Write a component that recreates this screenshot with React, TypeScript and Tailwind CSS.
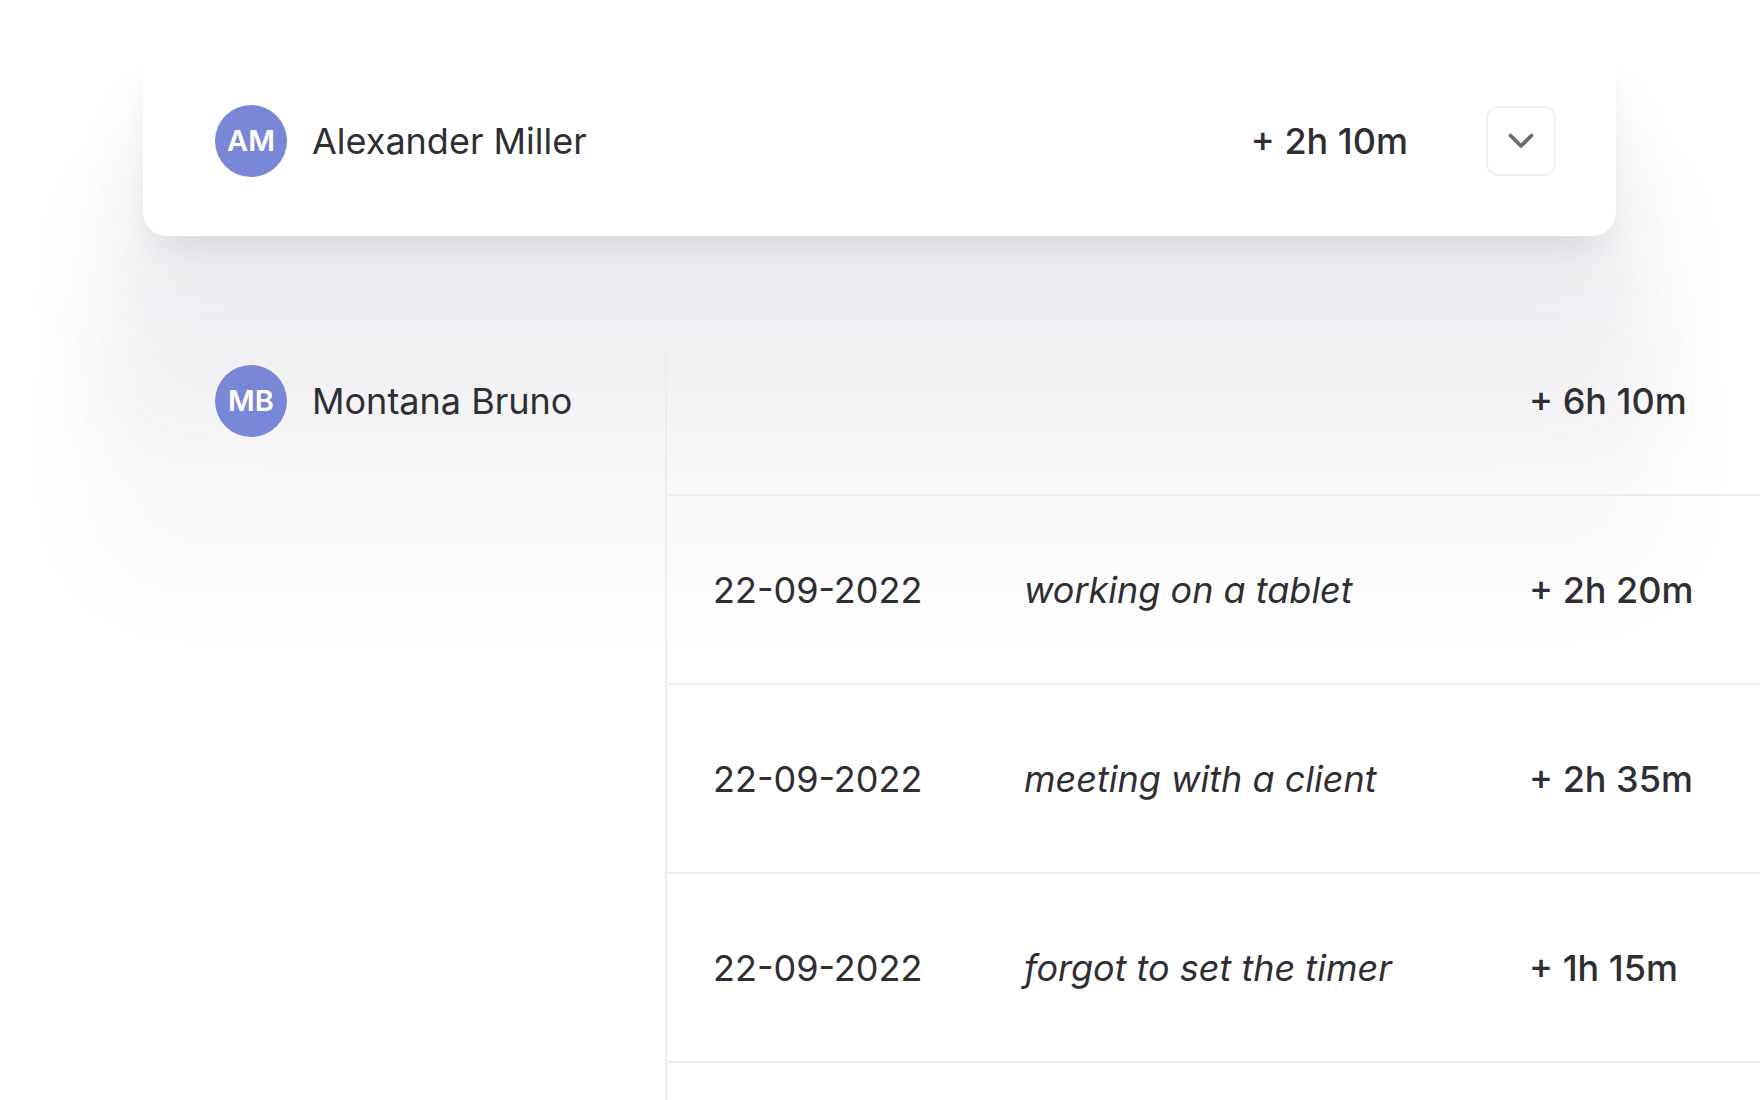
import React from "react";

const font = { fontFamily: "Inter, 'Noto Sans', sans-serif" };

function Avatar({ initials }: { initials: string }) {
  return (
    <div className="flex h-[72px] w-[72px] shrink-0 items-center justify-center rounded-full bg-[#7a87d8] text-[29px] font-semibold text-white">
      {initials}
    </div>
  );
}

function Chevron() {
  return (
    <svg width="28" height="18" viewBox="0 0 28 18" fill="none">
      <polyline
        points="3.5,3.5 14,14 24.5,3.5"
        stroke="#6b6b73"
        strokeWidth="3.8"
        strokeLinecap="round"
        strokeLinejoin="round"
      />
    </svg>
  );
}

const rows = [
  { date: "22-09-2022", desc: "working on a tablet", dur: "+ 2h 20m" },
  { date: "22-09-2022", desc: "meeting with a client", dur: "+ 2h 35m" },
  { date: "22-09-2022", desc: "forgot to set the timer", dur: "+ 1h 15m" },
  { date: "", desc: "", dur: "" },
];

export default function App() {
  return (
    <div
      className="relative h-[1100px] w-[1760px] overflow-hidden bg-white text-[#2e2e33]"
      style={font}
    >
      <div className="pl-[143px] pt-[46px]">
        <div className="flex h-[190px] w-[1473px] items-center rounded-[24px] bg-white pl-[72px] pr-[60px] shadow-[0_20px_30px_-10px_rgba(50,50,90,0.10),0_60px_80px_0_rgba(50,50,90,0.06),0_160px_100px_40px_rgba(50,50,90,0.045),0_300px_100px_60px_rgba(50,50,90,0.025)]">
          <Avatar initials="AM" />
          <span className="ml-[25px] text-[36px] leading-none">Alexander Miller</span>
          <span className="ml-auto text-[36px] font-medium leading-none">+ 2h 10m</span>
          <button className="ml-[78px] flex h-[70px] w-[70px] items-center justify-center rounded-[12px] border-2 border-[#f0f0f5] bg-white">
            <Chevron />
          </button>
        </div>

        <div className="mt-[72px] flex">
          <div className="flex w-[522px] shrink-0 items-start pl-[72px]">
            <div className="flex h-[186px] items-center">
              <Avatar initials="MB" />
              <span className="ml-[25px] text-[36px] leading-none">Montana Bruno</span>
            </div>
          </div>
          <div className="flex-1 border-l-2 border-[#ececf1]">
            <div className="flex h-[188px] items-center border-b-2 border-[#ececf1] pl-[862px]">
              <span className="text-[36px] font-medium leading-none">+ 6h 10m</span>
            </div>
            {rows.map((r, i) => (
              <div
                key={i}
                className="flex h-[189px] items-center border-b-2 border-[#ececf1] pl-[46px]"
              >
                <span className="w-[311px] shrink-0 text-[36px] leading-none">{r.date}</span>
                <span className="w-[505px] shrink-0 text-[36px] italic leading-none">{r.desc}</span>
                <span className="text-[36px] font-medium leading-none">{r.dur}</span>
              </div>
            ))}
          </div>
        </div>
      </div>
    </div>
  );
}
